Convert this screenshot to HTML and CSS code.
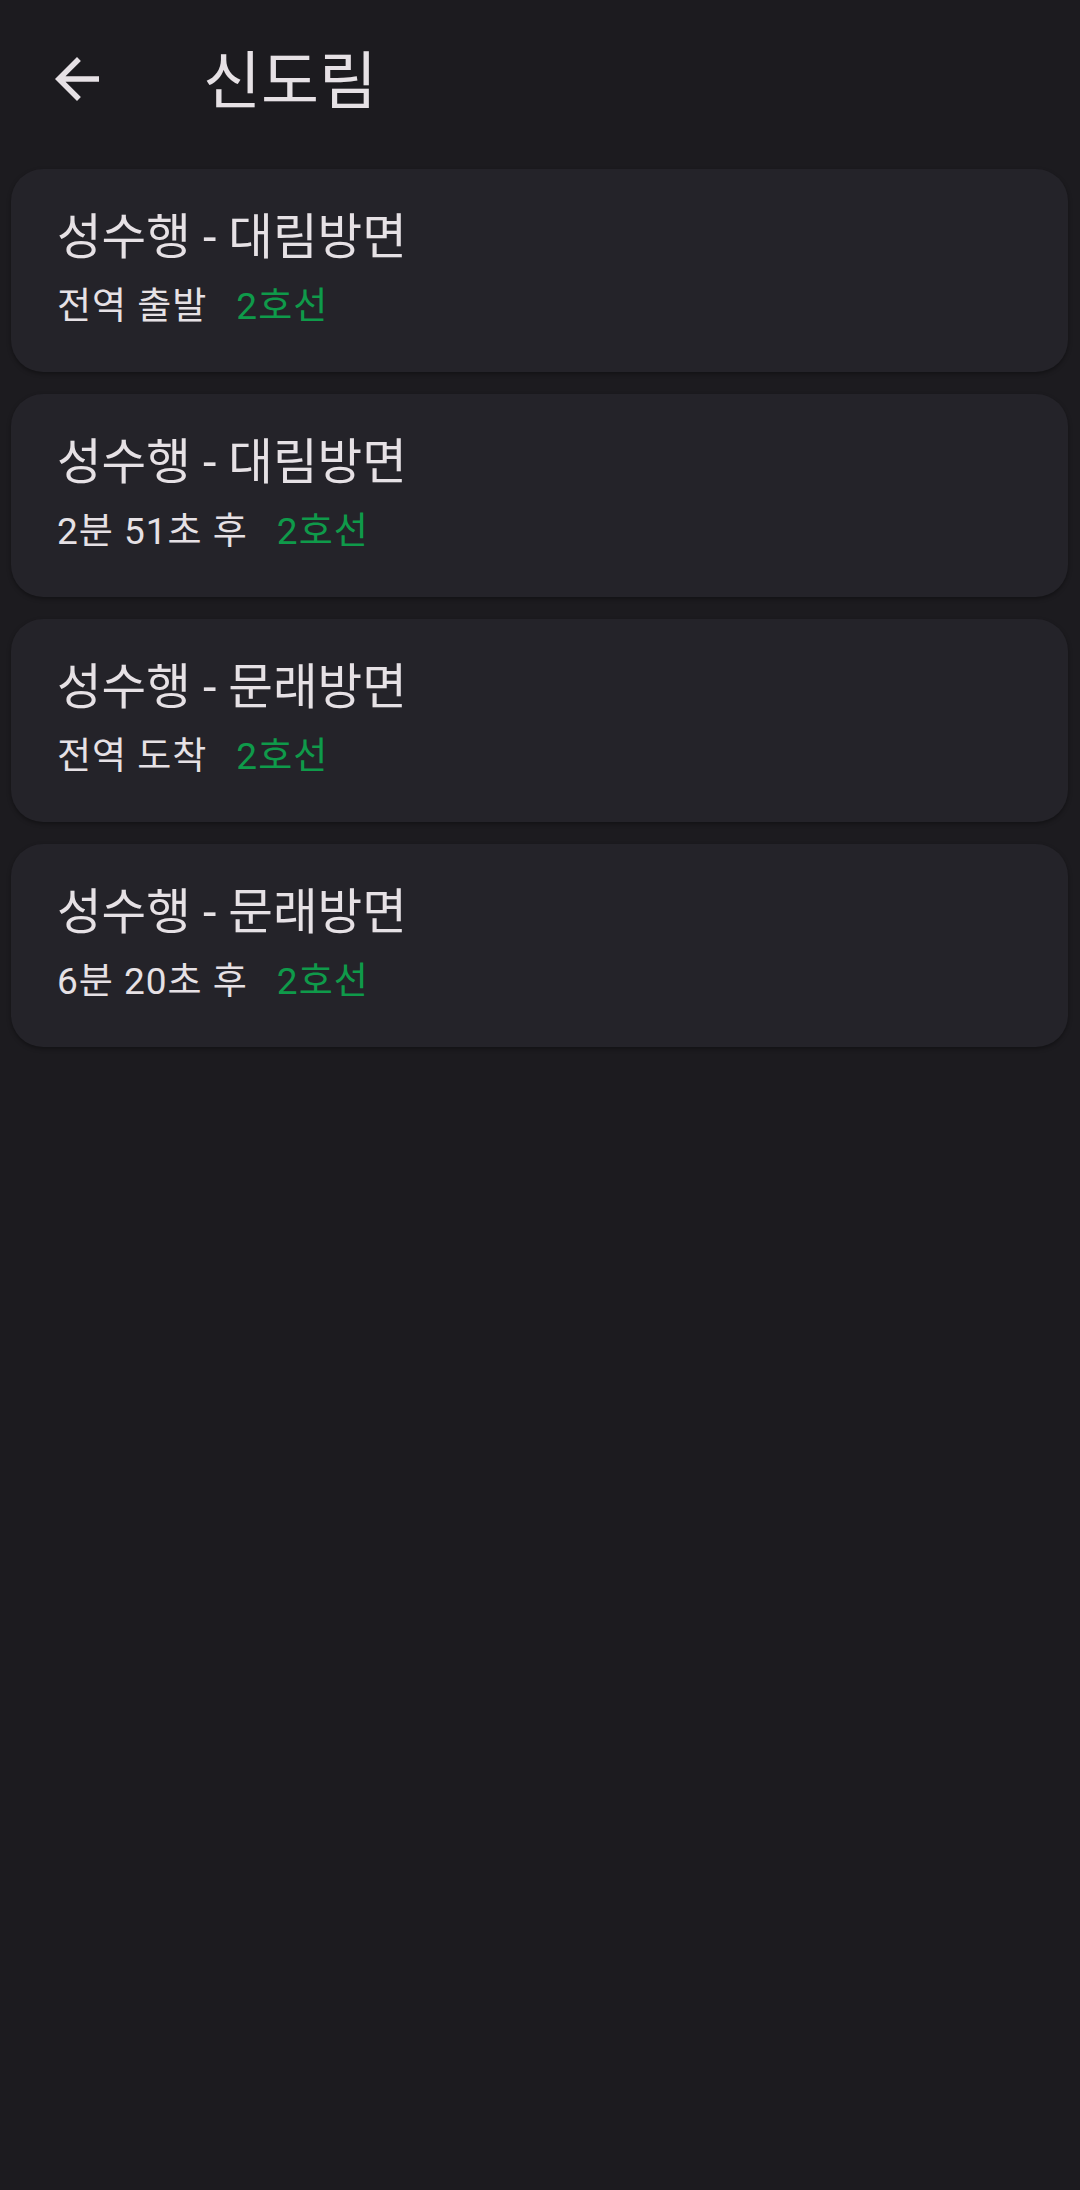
FILE: index.html
```
<!DOCTYPE html>
<html lang="ko">
<head>
<meta charset="utf-8">
<link rel="stylesheet" href="styles.css">
</head>
<body>
<header class="topbar">
  <div class="back">
    <svg viewBox="0 0 24 24" width="66" height="66"><path d="M20 11H7.83l5.59-5.59L12 4l-8 8 8 8 1.41-1.41L7.83 13H20v-2z" fill="#e6e1e5"/></svg>
  </div>
  <h1 class="title">신도림</h1>
</header>
<main class="list">
  <div class="card">
    <div class="card-title">성수행 - 대림방면</div>
    <div class="card-sub"><span class="status">전역 출발</span><span class="line">2호선</span></div>
  </div>
  <div class="card">
    <div class="card-title">성수행 - 대림방면</div>
    <div class="card-sub"><span class="status">2분 51초 후</span><span class="line">2호선</span></div>
  </div>
  <div class="card">
    <div class="card-title">성수행 - 문래방면</div>
    <div class="card-sub"><span class="status">전역 도착</span><span class="line">2호선</span></div>
  </div>
  <div class="card">
    <div class="card-title">성수행 - 문래방면</div>
    <div class="card-sub"><span class="status">6분 20초 후</span><span class="line">2호선</span></div>
  </div>
</main>
</body>
</html>
```
FILE: styles.css
```
html, body {
  margin: 0;
  padding: 0;
  background: #1c1b1f;
  width: 1080px;
  height: 2190px;
  font-family: Roboto, "Noto Sans CJK KR", sans-serif;
  color: #e6e1e5;
}
.topbar {
  height: 158px;
  display: flex;
  align-items: center;
  padding-left: 44px;
}
.back {
  width: 66px;
  height: 66px;
  display: flex;
}
.title {
  margin: 5px 0 0 93px;
  font-size: 63px;
  font-weight: 400;
  line-height: 1;
}
.list {
  display: flex;
  flex-direction: column;
  gap: 22px;
  padding: 11px 12px 0 11px;
}
.card {
  background: #242329;
  border-radius: 32px;
  padding: 34px 46px 32px;
  box-shadow: 0 2px 4px rgba(0, 0, 0, 0.35);
}
.card-title {
  font-size: 48.5px;
  line-height: 70px;
}
.card-sub {
  font-size: 37px;
  line-height: 67px;
  letter-spacing: 1px;
  display: flex;
  gap: 29px;
}
.line {
  color: #0f9a4a;
}
```
